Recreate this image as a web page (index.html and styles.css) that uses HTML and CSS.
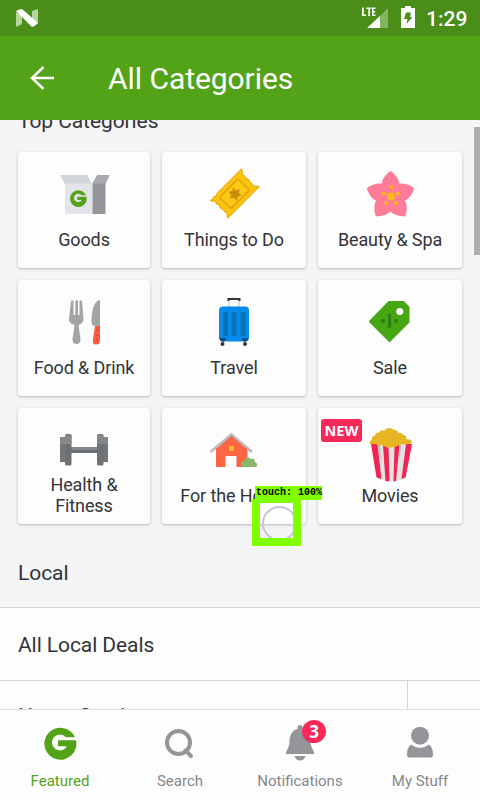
FILE: index.html
```html
<!DOCTYPE html>
<html lang="en">
<head>
<meta charset="utf-8">
<title>All Categories</title>
<link rel="stylesheet" href="styles.css">
</head>
<body>
<div class="screen">
  <header class="status">
    <svg class="n-logo" viewBox="16 9 22 18"><path fill="#b7d59e" d="M16 12l6 3v9l-6 3zM38 9v14l-6 3V11z"/><path fill="#fff" d="M16 11q4-2 6-2l16 14q-3 3-6 4z"/></svg>
    <div class="status-right">
      <svg class="signal" viewBox="361 6 28 23"><path fill="#83b45f" d="M388 8v20h-8V16z"/><path fill="#fff" d="M367 28l13-12v12zM362 7.500h1.700v7h2.300v1.500h-4zM366.500 7.500h5V9H370v7h-1.700V9h-1.800zM372 7.500h3.500V9h-2v2h1.700v1.500h-1.700v2h2V16H372z"/></svg>
      <svg class="battery" viewBox="400 6 16 23"><path fill="#fff" d="M405 6h6v2h4v20h-14V8h4z"/><path fill="#4a8d18" d="M406 12.500h5l-1 4.500h2.500l-6 7 1-5H404z"/></svg>
      <span class="clock">1:29</span>
    </div>
  </header>
  <div class="appbar">
    <svg class="back" viewBox="30 66 24 24"><path fill="none" stroke="#fff" stroke-width="2.500" d="M54 78H32M43.500 67L32 78l11.500 11"/></svg>
    <h1>All Categories</h1>
  </div>
  <main class="content">
    <h2 class="section top">Top Categories</h2>
    <div class="grid">
      <div class="card"><svg class="icon" viewBox="54 164 60 55"><path fill="#d2d5d9" d="M60 175h27l5 9H65z"/><path fill="#e2e4e8" d="M65 183.500h27.500V214H65z"/><path fill="#939598" d="M92.500 183.500l5-8.500h12l-4 8.500V214h-13z"/><path fill="#a6a8ab" d="M97.500 175h12l-4 8.500h-13z"/><path fill="#53a318" transform="translate(78.200 198) scale(.52)" d="M15-5.300A16 16 0 1 0 16-2.300H-2v6h9A8 8 0 1 1 6-5.300z"/></svg><span class="label">Goods</span></div>
      <div class="card"><svg class="icon" viewBox="204 164 60 55"><g transform="translate(234.500 193.700) rotate(-45)"><path fill="#fbc50e" stroke="#eda90d" stroke-width="1" stroke-linejoin="round" d="M-22-12.500q2.500 2 5 0 2.500 2 5 0H22.500q-1 3-3.500 4 1 3 0 6 2 2.500 0 5 1 4-.500 6 3 1 4 4H-22q1-3 3.500-4-2-3-.500-6-2-2.500 0-5-2-3 .500-6-2.500-1-3.500-4z"/><rect x="-13" y="-8" width="26" height="16" rx="1" fill="#fcc813" stroke="#e5a00d" stroke-width="1.500"/></g><path fill="#c98c0a" d="M233 187l2.500 3.500 4-1.500-.700 4 3 2.500-4 1.200-1 4-2.800-3-4 1 1-4-2.500-3 4-.700z"/></svg><span class="label">Things to Do</span></div>
      <div class="card"><svg class="icon" viewBox="360 164 60 55"><g transform="translate(390.500 196)" fill="#fe7c96"><path d="M0 2C-14-6-10-18 0-25 10-18 14-6 0 2z"/><path d="M0 2C-14-6-10-18 0-25 10-18 14-6 0 2z" transform="rotate(72)"/><path d="M0 2C-14-6-10-18 0-25 10-18 14-6 0 2z" transform="rotate(144)"/><path d="M0 2C-14-6-10-18 0-25 10-18 14-6 0 2z" transform="rotate(216)"/><path d="M0 2C-14-6-10-18 0-25 10-18 14-6 0 2z" transform="rotate(288)"/><circle r="12"/></g><g fill="#ffb51b"><circle cx="391" cy="196.500" r="4"/><circle cx="391.300" cy="187.300" r="2"/><circle cx="398" cy="193.500" r="2"/><circle cx="396" cy="203" r="2"/><circle cx="386.300" cy="203" r="2"/><circle cx="383.800" cy="193.500" r="2"/></g></svg><span class="label">Beauty &amp; Spa</span></div>

      <div class="card"><svg class="icon" viewBox="54 292 60 55"><path fill="#a3a4a7" d="M71 301q1-1.500 2.500 0V315h1.800V301q1.200-1.500 2.700 0v14h1.500V301q1.500-1.500 2.500 0l1.500 18q.300 4-5 6l2 14q.200 5-4 5t-4-5l2-14q-6-2-5.500-6z"/><path fill="#a3a4a7" d="M100 300v26h-6q-3-1-2.500-5 .500-20 8.500-21z"/><path fill="#fc5b42" d="M95 326h5v14q0 4.500-4 4.500t-3-5z"/><g fill="#d94431"><circle cx="97.500" cy="330" r="1"/><circle cx="97" cy="335" r="1"/><circle cx="96.500" cy="340" r="1"/></g></svg><span class="label">Food &amp; Drink</span></div>
      <div class="card"><svg class="icon" viewBox="204 292 60 55"><path fill="none" stroke="#b9bbbd" d="M229 300v8M239 300v8"/><path fill="none" stroke="#343639" stroke-width="2" d="M228.500 301v-2h11v2"/><rect x="219" y="306.500" width="30" height="35" rx="4" fill="#078bea"/><path fill="#0872b8" d="M223 312h5v24h-5zM231.500 312h5v24h-5zM240.500 312h5v24h-5z"/><path fill="#124b77" d="M220 338h6v2l-3 2-3-2zM242 338h6v2l-3 2-3-2z"/><circle cx="222.500" cy="344" r="2" fill="#343639"/><circle cx="245" cy="344" r="2" fill="#343639"/></svg><span class="label">Travel</span></div>
      <div class="card"><svg class="icon" viewBox="360 292 60 55"><path fill="#46a614" stroke="#46a614" stroke-width="2" stroke-linejoin="round" d="M389 302h14.500l5 5.500V322l-19 19L370 321.500z"/><circle cx="399.800" cy="311.500" r="3.500" fill="#fff"/><path fill="none" stroke="#2c7d10" stroke-width="3" stroke-linecap="round" d="M389.600 315v12"/><g fill="#2c7d10"><circle cx="383" cy="321" r="2"/><circle cx="396" cy="321" r="2"/></g></svg><span class="label">Sale</span></div>

      <div class="card"><svg class="icon" viewBox="54 420 60 55"><path fill="#85888a" d="M60 437h6v13h-6zM102 437h6v13h-6z"/><path fill="#74777a" d="M60 444h6v18h-6zM102 444h6v18h-6z"/><path fill="#85888b" d="M70 447h28v3H70z"/><path fill="#6b6e71" d="M70 450h28v3H70z"/><rect x="65" y="434" width="6.500" height="31.500" rx="1.500" fill="#6f7275"/><rect x="97" y="434" width="6.500" height="31.500" rx="1.500" fill="#6f7275"/><path fill="#85888b" d="M65 435h6.500v9H65zM97 435h6.500v9H97z"/></svg><span class="label">Health &amp; Fitness</span></div>
      <div class="card"><svg class="icon" viewBox="204 420 60 55"><path fill="#fe6543" d="M216 448l15.500-13 16 13v19h-11v-11h-11v11h-9.500z"/><path fill="none" stroke="#8b3b3b" stroke-width="1.500" d="M213 450l18.500-14.500L249 450"/><path fill="none" stroke="#c2b8bb" stroke-width="2.500" d="M210.500 452l21-17.500 20.500 17.500"/><rect x="229" y="446" width="5" height="5" rx="1" fill="#ffb829"/><path fill="#8bb76c" d="M242 467q-3-6 3-7 2-5 6-1 4-1 4 3 4 2 1 5z"/></svg><span class="label">For the Home</span></div>
      <div class="card"><span class="new">NEW</span><svg class="icon" viewBox="360 420 60 55"><path fill="#e2e3e5" d="M371 444h41l-6 34q-15 7-29 0z"/><path fill="#ef2553" d="M371 444h6.500l4 35-5-1.500zM383 445h5.500l1 36.500-4-.500zM394.500 445h5l-3.500 36-2.500.500zM406 444h6l-6.500 33.500-4 1.500z"/><path fill="#b8babd" d="M377.500 444h2l3 20zM400 445h1.500l-3 18z"/><path fill="#e6b521" d="M370 444q-1-3 2-4-1-4 3-4 0-4 4-3.500 2-3.500 5-1.500 2-3 5-3t5 2q4 0 4 3 4-1 5 2 4 0 3 4 5 0 6 3-1 2-5 2-2 1-5 0l-7 3-7 1-6-3q-4 2-6-1z"/></svg><span class="label">Movies</span></div>
    </div>
    <h2 class="section local">Local</h2>
    <div class="row">All Local Deals</div>
    <div class="row split"><span>Home Services</span><i></i></div>
    <div class="scrollbar"></div>
  </main>
  <nav class="tabs">
    <div class="tab active"><svg class="tab-icon" viewBox="40 720 40 46"><path fill="#53a318" transform="translate(60 742.500)" d="M15-5.300A16 16 0 1 0 16-2.300H-2v6h9A8 8 0 1 1 6-5.300z"/></svg><span>Featured</span></div>
    <div class="tab"><svg class="tab-icon" viewBox="160 720 40 46"><circle cx="178.500" cy="742.500" r="11.500" fill="none" stroke="#939598" stroke-width="4"/><path stroke="#939598" stroke-width="4" stroke-linecap="round" d="M185.500 750.500l5.500 5.500"/></svg><span>Search</span></div>
    <div class="tab"><svg class="tab-icon" viewBox="280 720 40 46"><path fill="#939598" d="M297.500 729v-1.500a2.500 2.500 0 0 1 5 0v1.500c6 1.500 8 7 8 13 0 6 4 8 3.500 12h-28c0-4 3.500-6 3.500-12s2-11.500 8-13zM294.500 756h11q-1.500 4.500-5.500 4.500t-5.500-4.500z"/></svg><b class="badge">3</b><span>Notifications</span></div>
    <div class="tab"><svg class="tab-icon" viewBox="400 720 40 46"><circle cx="420" cy="735.700" r="9" fill="#939598"/><path fill="#939598" d="M411 744.500q9 7 18 0 4 3 4 10 0 3-2 3h-22q-2 0-2-3 0-7 4-10z"/></svg><span>My Stuff</span></div>
  </nav>
  <div class="touch"><div class="touch-label">touch: 100%</div><div class="touch-box"><div class="touch-ring"></div></div></div>
</div>
</body>
</html>
```
FILE: styles.css
```css
* { box-sizing: border-box; }
body { margin: 0; font-family: Roboto, "Liberation Sans", sans-serif; color: #333437; }
h1, h2 { margin: 0; font-weight: 400; }
.screen { position: relative; width: 480px; height: 800px; overflow: hidden; display: flex; flex-direction: column; background: #f4f5f7; }

.status { flex: none; height: 36px; padding: 0 13px 0 16px; display: flex; align-items: center; justify-content: space-between; background: #4a8d18; color: #fff; }
.n-logo { width: 22px; height: 18px; }
.status-right { display: flex; align-items: center; }
.signal { width: 28px; height: 23px; margin: -2px 11px 0 0; }
.battery { width: 16px; height: 23px; margin: -2px 10px 0 0; }
.clock { font-size: 21px; font-weight: 500; line-height: 36px; padding-top: 2px; width: 41px; white-space: nowrap; }

.appbar { flex: none; height: 84px; padding-left: 30px; display: flex; align-items: center; background: #53a318; color: #fff; }
.back { width: 24px; height: 24px; margin-right: 54px; }
.appbar h1 { font-size: 30px; line-height: 40px; padding-top: 2px; letter-spacing: -.05px; }

.content { position: relative; height: 589px; overflow: hidden; }
.section { padding-left: 18px; font-size: 21px; line-height: 28px; letter-spacing: -.08px; }
.top { margin-top: -13px; height: 45px; }
.grid { display: grid; grid-template-columns: 132px 144px 144px; grid-auto-rows: 116px; gap: 12px; padding: 0 18px; }
.card { position: relative; display: flex; flex-direction: column; align-items: center; padding-top: 12px; background: #fdfdfe; border-radius: 3px; box-shadow: 0 1px 3px rgba(0, 0, 0, .25); }
.icon { flex: none; width: 60px; height: 55px; overflow: visible; }
.label { flex: none; height: 42px; margin-top: -1px; display: flex; align-items: center; justify-content: center; text-align: center; font-size: 18px; line-height: 21px; letter-spacing: -.12px; max-width: 110px; }
.new { position: absolute; left: 3px; top: 11px; width: 41px; height: 23px; border-radius: 3px; background: #f8285a; color: #fff; font: 700 14.5px/23px "Open Sans", sans-serif; text-align: center; }
.local { height: 83px; padding-top: 35px; }
.row { height: 73px; padding-left: 18px; border-top: 1px solid #d3d4d6; background: #fdfdfe; font-size: 21px; line-height: 74px; letter-spacing: -.08px; }
.split { display: flex; justify-content: space-between; line-height: 70px; }
.split i { width: 73px; border-left: 1px solid #d3d4d6; }
.scrollbar { position: absolute; right: 0; top: 7px; width: 6px; height: 128px; background: #adaeb0; }

.tabs { flex: none; height: 91px; display: grid; grid-template-columns: repeat(4, 1fr); border-top: 1px solid #dddee0; background: #fdfdfe; color: #85878a; }
.tab { position: relative; display: flex; flex-direction: column; align-items: center; padding-top: 10px; font-size: 15px; line-height: 20px; }
.tab-icon { width: 40px; height: 46px; margin-bottom: 5px; }
.active { color: #53a318; }
.badge { position: absolute; left: 62px; top: 10px; width: 24px; height: 23px; border-radius: 50%; background: #f8285a; color: #fff; font: 700 17px/24px "Open Sans", sans-serif; text-align: center; }

.touch { position: absolute; left: 252px; top: 486px; width: 70px; }
.touch-label { margin-left: 3px; height: 14px; background: #80ff00; color: #000; font: 700 10px/14px "Liberation Mono", monospace; padding-left: 1px; white-space: pre; }
.touch-box { width: 49px; height: 47px; margin-top: -1px; border: 8px solid #80ff00; border-top-width: 4px; overflow: hidden; }
.touch-ring { width: 35px; height: 35px; margin: 3px 0 0 2px; border: 2px solid #c9c3dc; border-radius: 50%; }
```
